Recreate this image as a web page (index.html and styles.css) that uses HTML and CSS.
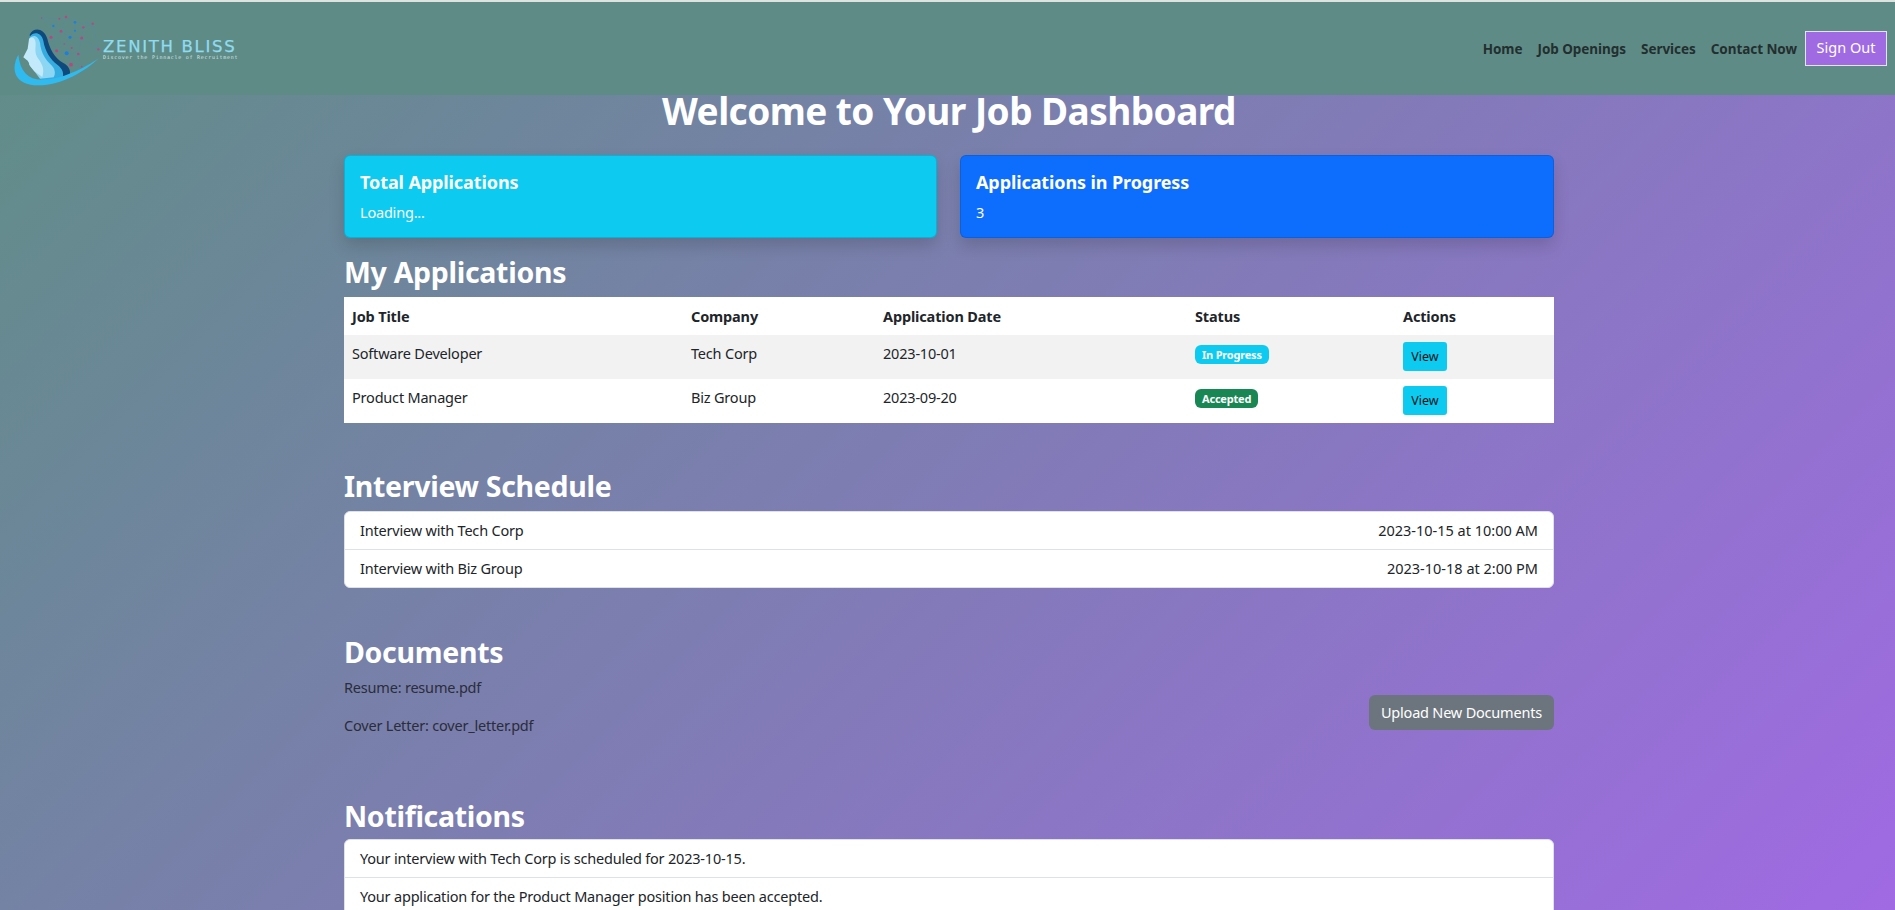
FILE: index.html
```html
<!DOCTYPE html>
<html lang="en">
<head>
<meta charset="utf-8">
<title>Job Dashboard</title>
<link rel="stylesheet" href="styles.css">
</head>
<body>
<header class="navbar">
  <a class="brand" href="#">
    <svg class="logo-mark" viewBox="0 0 330 255" width="110" height="85" aria-hidden="true">
      <g stroke="#4d89ad" stroke-width="1.3" fill="none" opacity=".75">
        <path d="M110 30L163 32 183 27 210 43 263 47 280 124M110 30L145 54 163 32M145 54L168 70 210 68 210 43M183 27L168 70M210 68L235 58 263 47M210 68L195 88 230 90 235 58M145 54L138 88 168 70 195 88 178 108 200 120 230 90 280 124M138 88L178 108 155 128 185 136 200 120 220 138 230 90M155 128L138 88M185 136L198 170 220 138 280 124M198 170L230 176 220 138M185 136L220 138"/>
      </g>
      <g fill="#b9477f">
        <circle cx="110" cy="30" r="2"/><circle cx="163" cy="32" r="3"/><circle cx="183" cy="27" r="4"/><circle cx="263" cy="47" r="3.5"/>
        <circle cx="235" cy="58" r="3.5"/><circle cx="168" cy="70" r="4"/><circle cx="138" cy="88" r="4.5"/><circle cx="230" cy="90" r="4.5"/>
        <circle cx="178" cy="108" r="2.5"/><circle cx="155" cy="128" r="4.5"/><circle cx="220" cy="138" r="4"/><circle cx="200" cy="120" r="3"/>
        <circle cx="198" cy="170" r="5.5"/><circle cx="280" cy="124" r="3.5"/><circle cx="230" cy="176" r="2.5"/>
      </g>
      <g fill="#1b7fe0">
        <circle cx="210" cy="43" r="4"/><circle cx="145" cy="54" r="3.5"/><circle cx="210" cy="68" r="3"/><circle cx="195" cy="88" r="4.5"/><circle cx="185" cy="136" r="6"/>
      </g>
      <path d="M74 80C84 58 116 58 127 92 134 122 148 150 175 165 190 173 197 186 195 198L165 218 110 215 85 150Z" fill="#0e4a7c"/>
      <path d="M74 86C86 70 108 72 115 98 120 130 137 155 157 170 173 183 178 195 172 212L110 222 90 170Z" fill="#35ace0"/>
      <path d="M72 92C84 78 100 82 105 104 108 135 122 155 138 170 150 182 153 195 146 208L105 212 88 190 72 170Z" fill="#8cd5f3"/>
      <path d="M72 94C80 84 90 88 92 104 92 122 88 136 100 152 110 166 120 182 112 207L88 190 76 175 72 165 68 158 55 148 68 122Z" fill="#c3eafa"/>
      <path d="M40 140C15 185 30 232 100 232 170 232 240 190 282 150 240 180 170 215 110 215 70 215 45 190 40 140Z" fill="#2fbaf0"/>
    </svg>
    <span class="brand-text">
      <span class="brand-name">ZENITH BLISS</span>
      <span class="brand-tag">Discover the Pinnacle of Recruitment</span>
    </span>
  </a>
  <nav class="nav">
    <a href="#">Home</a>
    <a href="#">Job Openings</a>
    <a href="#">Services</a>
    <a href="#">Contact Now</a>
    <a href="#" class="signout">Sign Out</a>
  </nav>
</header>
<main class="container">
  <h1 class="page-title">Welcome to Your Job Dashboard</h1>
  <div class="stats">
    <div class="stat stat-cyan"><h5>Total Applications</h5><p>Loading...</p></div>
    <div class="stat stat-blue"><h5>Applications in Progress</h5><p>3</p></div>
  </div>
  <section class="sec-apps">
    <h2>My Applications</h2>
    <table class="table">
      <thead><tr><th class="c1">Job Title</th><th class="c2">Company</th><th class="c3">Application Date</th><th class="c4">Status</th><th>Actions</th></tr></thead>
      <tbody>
        <tr class="striped"><td>Software Developer</td><td>Tech Corp</td><td>2023-10-01</td><td><span class="badge badge-cyan">In Progress</span></td><td><a class="btn-view" href="#">View</a></td></tr>
        <tr><td>Product Manager</td><td>Biz Group</td><td>2023-09-20</td><td><span class="badge badge-green">Accepted</span></td><td><a class="btn-view" href="#">View</a></td></tr>
      </tbody>
    </table>
  </section>
  <section class="sec">
    <h2>Interview Schedule</h2>
    <ul class="list">
      <li><span>Interview with Tech Corp</span><span class="when">2023-10-15 at 10:00 AM</span></li>
      <li><span>Interview with Biz Group</span><span class="when">2023-10-18 at 2:00 PM</span></li>
    </ul>
  </section>
  <section class="sec-docs">
    <h2 class="docs-title">Documents</h2>
    <div class="docs">
      <div><p>Resume: resume.pdf</p><p>Cover Letter: cover_letter.pdf</p></div>
      <a class="btn-upload" href="#">Upload New Documents</a>
    </div>
  </section>
  <section class="sec-notes">
    <h2 class="notes-title">Notifications</h2>
    <ul class="list">
      <li>Your interview with Tech Corp is scheduled for 2023-10-15.</li>
      <li>Your application for the Product Manager position has been accepted.</li>
    </ul>
  </section>
</main>
</body>
</html>
```
FILE: styles.css
```css
* { box-sizing: border-box; }
html { height: 100%; overflow: hidden; }
body {
  margin: 0;
  height: 100%;
  overflow: hidden;
  font-family: "Noto Sans", "Open Sans", sans-serif;
  font-size: 14.5px;
  letter-spacing: -.2px;
  line-height: 24px;
  color: #212529;
  background: linear-gradient(135deg, #5f8e86 0%, #a06ae3 100%);
}
a { text-decoration: none; color: inherit; }
h1, h2, h5, p, ul { margin: 0; padding: 0; }
.navbar {
  position: relative;
  z-index: 1;
  height: 95px;
  border-top: 2px solid #dfe3e0;
  background: #5f8b87;
  display: flex;
  align-items: center;
  justify-content: space-between;
  padding: 0 8px 0 5px;
}
.brand { display: flex; align-items: center; }
.logo-mark { display: block; margin-top: 4px; }
.brand-text { display: flex; flex-direction: column; margin-left: -12px; margin-top: 3px; }
.brand-name {
  font-family: "DejaVu Sans", sans-serif;
  font-size: 16.5px;
  line-height: 14px;
  letter-spacing: 1.7px;
  color: #8fdcf0;
  -webkit-text-stroke: .25px #8fdcf0;
}
.brand-tag {
  font-family: "DejaVu Sans Mono", monospace;
  font-size: 5px;
  line-height: 6px;
  letter-spacing: .75px;
  color: #d4e6e6;
  white-space: nowrap;
}
.nav { display: flex; align-items: center; gap: 15px; font-weight: 700; font-size: 13.5px; letter-spacing: -.05px; color: #222f2e; }
.signout {
  font-weight: 400;
  font-size: 14.5px;
  letter-spacing: 0;
  color: #fff;
  background: #a06ae3;
  border: 1px solid #e4e4ee;
  width: 82px;
  height: 35px;
  line-height: 31px;
  text-align: center;
  margin-left: -7px;
}
.container { width: 1210px; margin-left: 344px; }
.page-title {
  font-size: 37px;
  letter-spacing: -.55px;
  line-height: 46px;
  font-weight: 700;
  color: #fff;
  text-align: center;
  margin-top: -7px;
}
.stats { display: grid; grid-template-columns: 593px 594px; gap: 23px; margin-top: 21px; }
.stat {
  height: 83px;
  border-radius: 6px;
  padding: 14px 15px;
  color: #fff;
  box-shadow: 0 8px 16px rgba(0,0,0,.15);
  border: 1px solid rgba(0,0,0,.125);
}
.stat h5 { font-size: 18px; letter-spacing: -.1px; line-height: 24px; font-weight: 700; margin-bottom: 6px; }
.stat-cyan { background: #0dcaf0; }
.stat-blue { background: #0d6efd; }
h2 { font-size: 28.5px; letter-spacing: -.3px; line-height: 38px; font-weight: 700; color: #fff; margin-bottom: 6px; }
.sec-apps { margin-top: 15px; }
.table { width: 100%; border-collapse: collapse; background: #fff; }
.table th { text-align: left; font-weight: 700; padding: 7px 8px; height: 38px; letter-spacing: -.15px; }
.table td { padding: 6px 8px 0; height: 44px; vertical-align: top; }
.c1 { width: 339px; }
.c2 { width: 192px; }
.c3 { width: 312px; }
.c4 { width: 208px; }
.striped { background: #f2f2f2; }
.badge {
  display: block;
  width: fit-content;
  margin-top: 4px;
  font-size: 11px;
  letter-spacing: -.2px;
  line-height: 11px;
  font-weight: 700;
  color: #fff;
  border-radius: 6px;
  padding: 4px 7px;
}
.badge-cyan { background: #0dcaf0; }
.badge-green { background: #198754; }
.btn-view {
  display: block;
  margin-top: 1px;
  background: #0dcaf0;
  color: #111;
  font-size: 12.5px;
  letter-spacing: 0;
  line-height: 29px;
  border-radius: 3px;
  width: 44px;
  height: 29px;
  text-align: center;
}
.sec { margin-top: 44px; }
.sec-docs { margin-top: 45px; }
.sec-notes { margin-top: 47px; }
.docs-title { margin-bottom: 4px; }
.notes-title { margin-bottom: 4px; }
.list { list-style: none; background: #fff; border: 1px solid #dee2e6; border-radius: 6px; }
.list li { display: flex; justify-content: space-between; height: 37px; padding: 6px 15px; }
.list li + li { border-top: 1px solid #dee2e6; height: 38px; }
.when { letter-spacing: 0; }
.docs { display: flex; justify-content: space-between; align-items: center; }
.docs p { margin-bottom: 14px; color: #2a2d3a; }
.docs p:last-child { margin-bottom: 13px; }
.btn-upload {
  background: #6c757d;
  color: #fff;
  border-radius: 6px;
  height: 35px;
  padding: 5px 12px;
  white-space: nowrap;
}
```
